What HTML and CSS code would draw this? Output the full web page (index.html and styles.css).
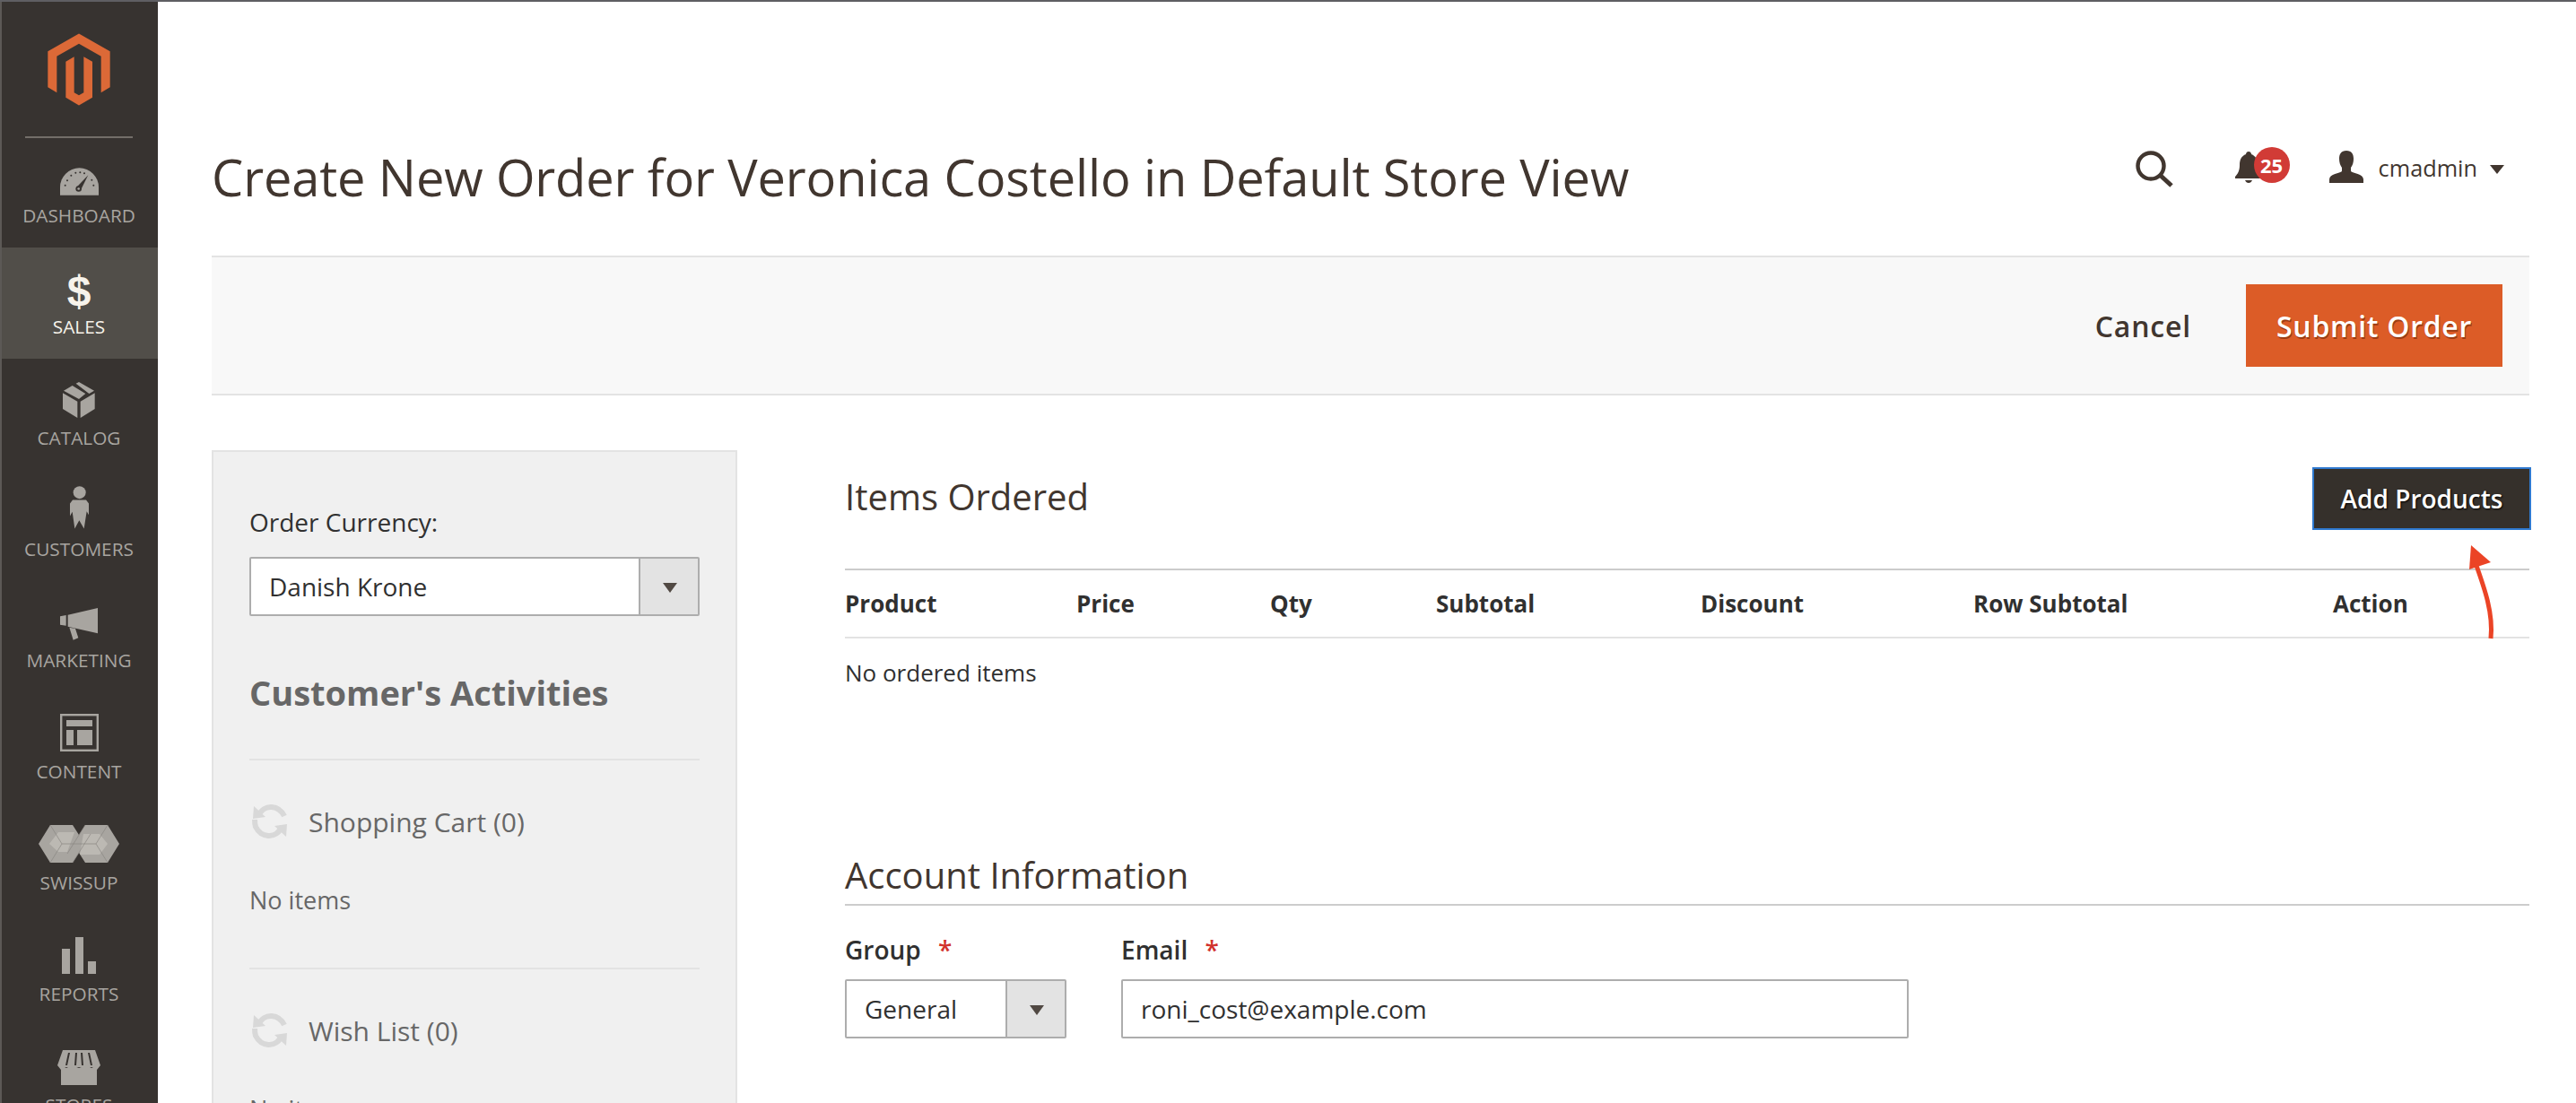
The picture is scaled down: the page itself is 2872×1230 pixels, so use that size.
FILE: index.html
```html
<!DOCTYPE html>
<html lang="en">
<head>
  <meta charset="UTF-8">
  <title>Create New Order for Veronica Costello in Default Store View</title>
  <link rel="stylesheet" href="styles.css">
</head>
<body>

  <nav class="sidebar">
    <div class="logo">
      <svg width="70" height="81" viewBox="159 110 210 242">
        <path fill="#dc6937" d="M264 111L368 170V290L338 308V187L264 145L190 187V308L160 290V170Z"/>
        <path fill="#dc6937" d="M220 205L248 188V308L264 317L280 308V188L309 205V325L264 351L220 325Z"/>
      </svg>
    </div>

    <a class="nav-item">
      <span class="nav-icon">
        <svg width="43" height="31" viewBox="198 560 129 92">
          <path fill="#a8a5a0" d="M198 652V625A64.5 64.5 0 0 1 327 625V652Z"/>
          <path fill="#373330" d="M292 584L268 632L252 626Z"/>
          <circle fill="#373330" cx="260" cy="630" r="10"/>
          <circle fill="#a8a5a0" cx="260" cy="630" r="4"/>
          <g fill="#373330">
            <circle cx="215" cy="619" r="3"/><circle cx="222" cy="602" r="3"/><circle cx="235" cy="586" r="3"/>
            <circle cx="250" cy="577" r="3"/><circle cx="265" cy="575" r="3"/><circle cx="279" cy="578" r="3"/>
            <circle cx="304" cy="601" r="3"/><circle cx="310" cy="619" r="3"/>
          </g>
        </svg>
      </span>
      <span class="nav-label">DASHBOARD</span>
    </a>

    <a class="nav-item active">
      <span class="nav-icon dollar">$</span>
      <span class="nav-label">SALES</span>
    </a>

    <a class="nav-item">
      <span class="nav-icon">
        <svg width="36" height="40" viewBox="208 15 108 120">
          <path fill="#a8a5a0" d="M208 52L257 80V135L208 105ZM267 80L315 52V105L267 135Z"/>
          <path fill="#a8a5a0" d="M211 44L240 27L284 54L262 72ZM252 20L262 15L313 44L296 54Z"/>
        </svg>
      </span>
      <span class="nav-label">CATALOG</span>
    </a>

    <a class="nav-item">
      <span class="nav-icon">
        <svg width="21" height="48" viewBox="234 366 63 143">
          <circle fill="#a8a5a0" cx="266" cy="387" r="21"/>
          <path fill="#a8a5a0" d="M243 412H288L297 424V462L290 450L281 508L265 480L250 508L242 452L234 466V424Z"/>
        </svg>
      </span>
      <span class="nav-label">CUSTOMERS</span>
    </a>

    <a class="nav-item">
      <span class="nav-icon">
        <svg width="42" height="36" viewBox="201 773 126 108">
          <path fill="#a8a5a0" d="M201 801L221 797V832L201 829ZM227 796L327 773V858L227 835ZM232 838L252 842L262 873L245 880Z"/>
        </svg>
      </span>
      <span class="nav-label">MARKETING</span>
    </a>

    <a class="nav-item">
      <span class="nav-icon">
        <svg width="43" height="42" viewBox="0 0 43 42">
          <rect x="1.2" y="1.2" width="40.6" height="39.6" fill="none" stroke="#a8a5a0" stroke-width="2.4"/>
          <path fill="#a8a5a0" d="M7 7H36V14H7ZM7 18H15V35H7ZM19 18H36V35H19Z"/>
        </svg>
      </span>
      <span class="nav-label">CONTENT</span>
    </a>

    <a class="nav-item">
      <span class="nav-icon">
        <svg width="90" height="42" viewBox="0 0 90 42">
          <path fill="#a8a5a0" d="M13 0H38L45 11L52 0H77L90 21L77 42H52L45 31L38 42H13L0 21Z"/>
          <path fill="#bcb9b3" d="M22 8H40L32 30H22L12 21ZM50 10H68L77 21L68 33H46Z"/>
          <path fill="none" stroke="#8a8782" stroke-width="0.7" d="M13 0L26 21L13 42M77 0L64 21L77 42M52 0L32 32M58 10L38 42M26 21H64"/>
        </svg>
      </span>
      <span class="nav-label">SWISSUP</span>
    </a>

    <a class="nav-item">
      <span class="nav-icon">
        <svg width="38" height="41" viewBox="0 0 38 41">
          <path fill="#a8a5a0" d="M0 13H9V41H0ZM15 0H24V41H15ZM29 27H38V41H29Z"/>
        </svg>
      </span>
      <span class="nav-label">REPORTS</span>
    </a>

    <a class="nav-item">
      <span class="nav-icon">
        <svg width="48" height="39" viewBox="0 0 48 39">
          <path fill="#a8a5a0" d="M6 0H42L48 17L44 22L38 19L32 22L24 19L16 22L10 19L4 22L0 17Z"/>
          <path fill="#373330" d="M12 3H14L11 17H9ZM20 3H22L21 17H19ZM26 3H28L29 17H27ZM34 3H36L39 17H37Z"/>
          <path fill="#a8a5a0" d="M4 20H44V39H4Z"/>
        </svg>
      </span>
      <span class="nav-label">STORES</span>
    </a>
  </nav>

  <main class="page">
    <header class="page-head">
      <h1>Create New Order for Veronica Costello in Default Store View</h1>
      <div class="head-tools">
        <svg class="icon-search" width="42" height="41" viewBox="0 0 42 41">
          <circle cx="17" cy="17" r="14.5" fill="none" stroke="#41362f" stroke-width="4.4"/>
          <path d="M27 27L40 39" stroke="#41362f" stroke-width="5" fill="none"/>
        </svg>
        <div class="bell">
          <svg width="30" height="36" viewBox="0 0 30 36">
            <path fill="#41362f" d="M15 1C17 1 18 2.500 18 4C23 6 25 10 25 16C25 22 27 26 30 29V31H0V29C3 26 5 22 5 16C5 10 7 6 12 4C12 2.500 13 1 15 1ZM11 33H19C18 35 17 36 15 36C13 36 12 35 11 33Z"/>
          </svg>
          <span class="badge">25</span>
        </div>
        <svg class="icon-user" width="38" height="36" viewBox="0 0 38 36">
          <path fill="#41362f" d="M19 0C25 0 27 4 27 9C27 13 26 16 24 19V23C26 25 38 26 38 32V36H0V32C0 26 12 25 14 23V19C12 16 11 13 11 9C11 4 13 0 19 0Z"/>
        </svg>
        <span class="user-name">cmadmin</span>
        <span class="caret"></span>
      </div>
    </header>

    <div class="actions">
      <a class="cancel">Cancel</a>
      <button class="btn-submit">Submit Order</button>
    </div>

    <div class="columns">
      <aside class="panel">
        <label class="panel-label">Order Currency:</label>
        <div class="select select-wide">
          <span class="select-value">Danish Krone</span>
          <span class="select-arrow"></span>
        </div>
        <h3 class="panel-title">Customer's Activities</h3>

        <div class="activity">
          <div class="activity-head">
            <svg class="refresh" width="40" height="40" viewBox="0 0 40 40">
              <path fill="none" stroke="#d8d8d8" stroke-width="6" d="M7 14C10 7 16 3.500 22 4C28 4.500 33 8 36 14M33 26C30 33 24 36.500 18 36C12 35.500 7 32 4 26C3 23 3 20 3 18"/>
              <path fill="#d8d8d8" d="M2 3L15 15L1 17ZM38 37L25 25L39 23Z"/>
            </svg>
            <span>Shopping Cart (0)</span>
          </div>
          <p class="activity-empty">No items</p>
        </div>

        <div class="activity">
          <div class="activity-head">
            <svg class="refresh" width="40" height="40" viewBox="0 0 40 40">
              <path fill="none" stroke="#d8d8d8" stroke-width="6" d="M7 14C10 7 16 3.500 22 4C28 4.500 33 8 36 14M33 26C30 33 24 36.500 18 36C12 35.500 7 32 4 26C3 23 3 20 3 18"/>
              <path fill="#d8d8d8" d="M2 3L15 15L1 17ZM38 37L25 25L39 23Z"/>
            </svg>
            <span>Wish List (0)</span>
          </div>
          <p class="activity-empty">No items</p>
        </div>
      </aside>

      <section class="order">
        <div class="items-head">
          <h2 class="section-title items-title">Items Ordered</h2>
          <button class="btn-add">Add Products</button>
        </div>

        <div class="items-row items-titles">
          <span>Product</span>
          <span>Price</span>
          <span>Qty</span>
          <span>Subtotal</span>
          <span>Discount</span>
          <span>Row Subtotal</span>
          <span>Action</span>
        </div>
        <p class="items-empty">No ordered items</p>

        <h2 class="section-title account-title">Account Information</h2>
        <div class="account-fields">
          <div class="field field-group">
            <label class="field-label">Group <em>*</em></label>
            <div class="select">
              <span class="select-value">General</span>
              <span class="select-arrow"></span>
            </div>
          </div>
          <div class="field field-email">
            <label class="field-label">Email <em>*</em></label>
            <div class="text-input">roni_cost@example.com</div>
          </div>
        </div>
      </section>
    </div>

    <!-- arrow drawn on top of the screenshot -->
    <svg class="callout" width="34" height="106" viewBox="0 0 34 106">
      <path fill="none" stroke="#eb4426" stroke-width="5" stroke-linecap="butt" d="M27 104C30 76 20 48 10 20"/>
      <path fill="#eb4426" d="M5 0L27 19L3 27Z"/>
    </svg>
  </main>

</body>
</html>
```

FILE: styles.css
```css
html, body {
  height: 100%;
  margin: 0;
}
body {
  display: flex;
  overflow: hidden;
  font-family: "Open Sans", sans-serif;
  font-size: 28px;
  color: #303030;
  background-color: #fff;
  border-top: 2px solid #5f5f63;
  box-sizing: border-box;
}
h1, h2, h3, p {
  margin: 0;
  font-weight: normal;
}
button {
  font-family: inherit;
  cursor: pointer;
}

/* sidebar */
.sidebar {
  flex: 0 0 176px;
  box-sizing: border-box;
  background-color: #373330;
  border-left: 2px solid #5c5956;
  overflow: hidden;
}
.logo {
  height: 152px;
  box-sizing: border-box;
  padding-top: 35px;
  text-align: center;
  margin: 0 28px -2px 26px;
  border-bottom: 2px solid #736e69;
}
.nav-item {
  display: block;
  height: 124px;
  padding-right: 2px;
  text-align: center;
  color: #a8a5a0;
}
.nav-item.active {
  background-color: #514e49;
  color: #f7f3eb;
}
.nav-icon {
  display: flex;
  align-items: flex-end;
  justify-content: center;
  height: 66px;
  box-sizing: border-box;
}
.dollar {
  font-family: "Liberation Sans", sans-serif;
  font-weight: bold;
  font-size: 48px;
  line-height: 35px;
}
.nav-label {
  display: block;
  margin-top: 7px;
  font-size: 20.800px;
  line-height: 30px;
}

/* page */
.page {
  flex: 1;
  position: relative;
  padding: 0 52px 0 60px;
  min-width: 0;
}
.page-head {
  height: 283px;
  display: flex;
  justify-content: space-between;
  box-sizing: border-box;
  padding-top: 155px;
}
h1 {
  font-size: 56px;
  letter-spacing: -0.12px;
  line-height: 80px;
  color: #41362f;
}
.head-tools {
  display: flex;
  align-items: flex-start;
  padding-right: 28px;
  margin-top: 11px;
  height: 50px;
}
.icon-search {
  margin-right: 69px;
}
.bell {
  position: relative;
  width: 30px;
  height: 36px;
  margin-right: 75px;
}
.badge {
  position: absolute;
  left: 21px;
  top: -4px;
  width: 40px;
  height: 40px;
  border-radius: 50%;
  background-color: #d13b36;
  color: #fff;
  font-size: 22px;
  font-weight: 700;
  line-height: 40px;
  text-align: center;
}
.user-name {
  margin-left: 17px;
  margin-right: 14px;
  font-size: 25.300px;
  line-height: 38px;
  color: #41362f;
}
.caret {
  margin-top: 16px;
  border-style: solid;
  border-width: 10px 8px 0 8px;
  border-color: #41362f transparent transparent transparent;
}

.actions {
  height: 156px;
  box-sizing: border-box;
  background-color: #f8f8f8;
  border-top: 2px solid #e3e3e3;
  border-bottom: 2px solid #e3e3e3;
  display: flex;
  align-items: center;
  justify-content: flex-end;
  padding-right: 30px;
}
.cancel {
  font-size: 32px;
  font-weight: 600;
  letter-spacing: 0.8px;
  color: #41362f;
  margin-right: 61px;
}
.btn-submit {
  width: 286px;
  height: 92px;
  border: none;
  background-color: #dc5c27;
  color: #fff;
  font-size: 32px;
  font-weight: 600;
  letter-spacing: 0.7px;
  text-shadow: 1px 2px 0 #9c3b12;
}

.columns {
  display: flex;
  gap: 120px;
  margin-top: 61px;
}

/* left panel */
.panel {
  flex: 0 0 586px;
  box-sizing: border-box;
  height: 1000px;
  padding: 60px 40px 0 40px;
  background-color: #f0f0f0;
  border: 2px solid #e3e3e3;
}
.panel-label {
  display: block;
  line-height: 36px;
  margin-bottom: 21px;
}
.select {
  display: flex;
  height: 66px;
  box-sizing: border-box;
  background-color: #fff;
  border: 2px solid #adadad;
  border-radius: 2px;
}
.select-value {
  flex: 1;
  padding-left: 20px;
  line-height: 62px;
}
.select-arrow {
  flex: 0 0 66px;
  box-sizing: border-box;
  position: relative;
  background-color: #e3e3e3;
  border-left: 2px solid #adadad;
}
.select-arrow::after {
  content: "";
  position: absolute;
  left: 25px;
  top: 27px;
  border-style: solid;
  border-width: 11px 8px 0 8px;
  border-color: #514943 transparent transparent transparent;
}
.panel-title {
  margin-top: 55px;
  font-size: 38px;
  font-weight: 700;
  line-height: 60px;
  color: #676767;
  padding-bottom: 44px;
  border-bottom: 2px solid #e3e3e3;
}
.activity {
  border-bottom: 2px solid #e3e3e3;
  height: 233px;
  box-sizing: border-box;
  padding-top: 48px;
  color: #676767;
}
.activity-head {
  display: flex;
  align-items: center;
  gap: 23px;
  font-size: 30px;
  height: 40px;
  padding-left: 3px;
}
.activity-empty {
  margin-top: 48px;
  font-size: 27px;
  line-height: 40px;
}

/* order column */
.order {
  flex: 1;
  min-width: 0;
  padding-top: 19px;
}
.items-head {
  display: flex;
  justify-content: space-between;
  align-items: center;
  height: 70px;
  margin-right: -2px;
}
.items-title {
  padding-bottom: 4px;
}
.section-title {
  font-size: 40px;
  line-height: 56px;
  color: #41362f;
}
.btn-add {
  width: 244px;
  height: 70px;
  border: 2px solid #2f79cf;
  background-color: #35302b;
  color: #fff;
  font-size: 28px;
  font-weight: 600;
  text-shadow: 1px 1px 2px #000;
}
.items-row {
  display: grid;
  grid-template-columns: 258px 216px 185px 295px 304px 401px 219px;
}
.items-titles {
  margin-top: 43px;
  height: 78px;
  box-sizing: border-box;
  align-items: center;
  font-size: 26px;
  font-weight: 700;
  border-top: 2px solid #ccc;
  border-bottom: 2px solid #e3e3e3;
}
.items-empty {
  margin-top: 18px;
  font-size: 26px;
  line-height: 40px;
}
.account-title {
  margin-top: 178px;
  padding-bottom: 4px;
  border-bottom: 2px solid #ccc;
}
.account-fields {
  display: flex;
  gap: 61px;
  margin-top: 30px;
}
.field-group {
  flex: 0 0 247px;
}
.field-email {
  flex: 0 0 878px;
}
.field-label {
  display: block;
  font-weight: 600;
  line-height: 38px;
  margin-bottom: 14px;
}
.field-label em {
  font-style: normal;
  color: #d2322d;
  margin-left: 12px;
}
.text-input {
  height: 66px;
  box-sizing: border-box;
  border: 2px solid #adadad;
  border-radius: 2px;
  padding-left: 20px;
  line-height: 62px;
}

.callout {
  position: absolute;
  top: 606px;
  right: 88px;
}
```
